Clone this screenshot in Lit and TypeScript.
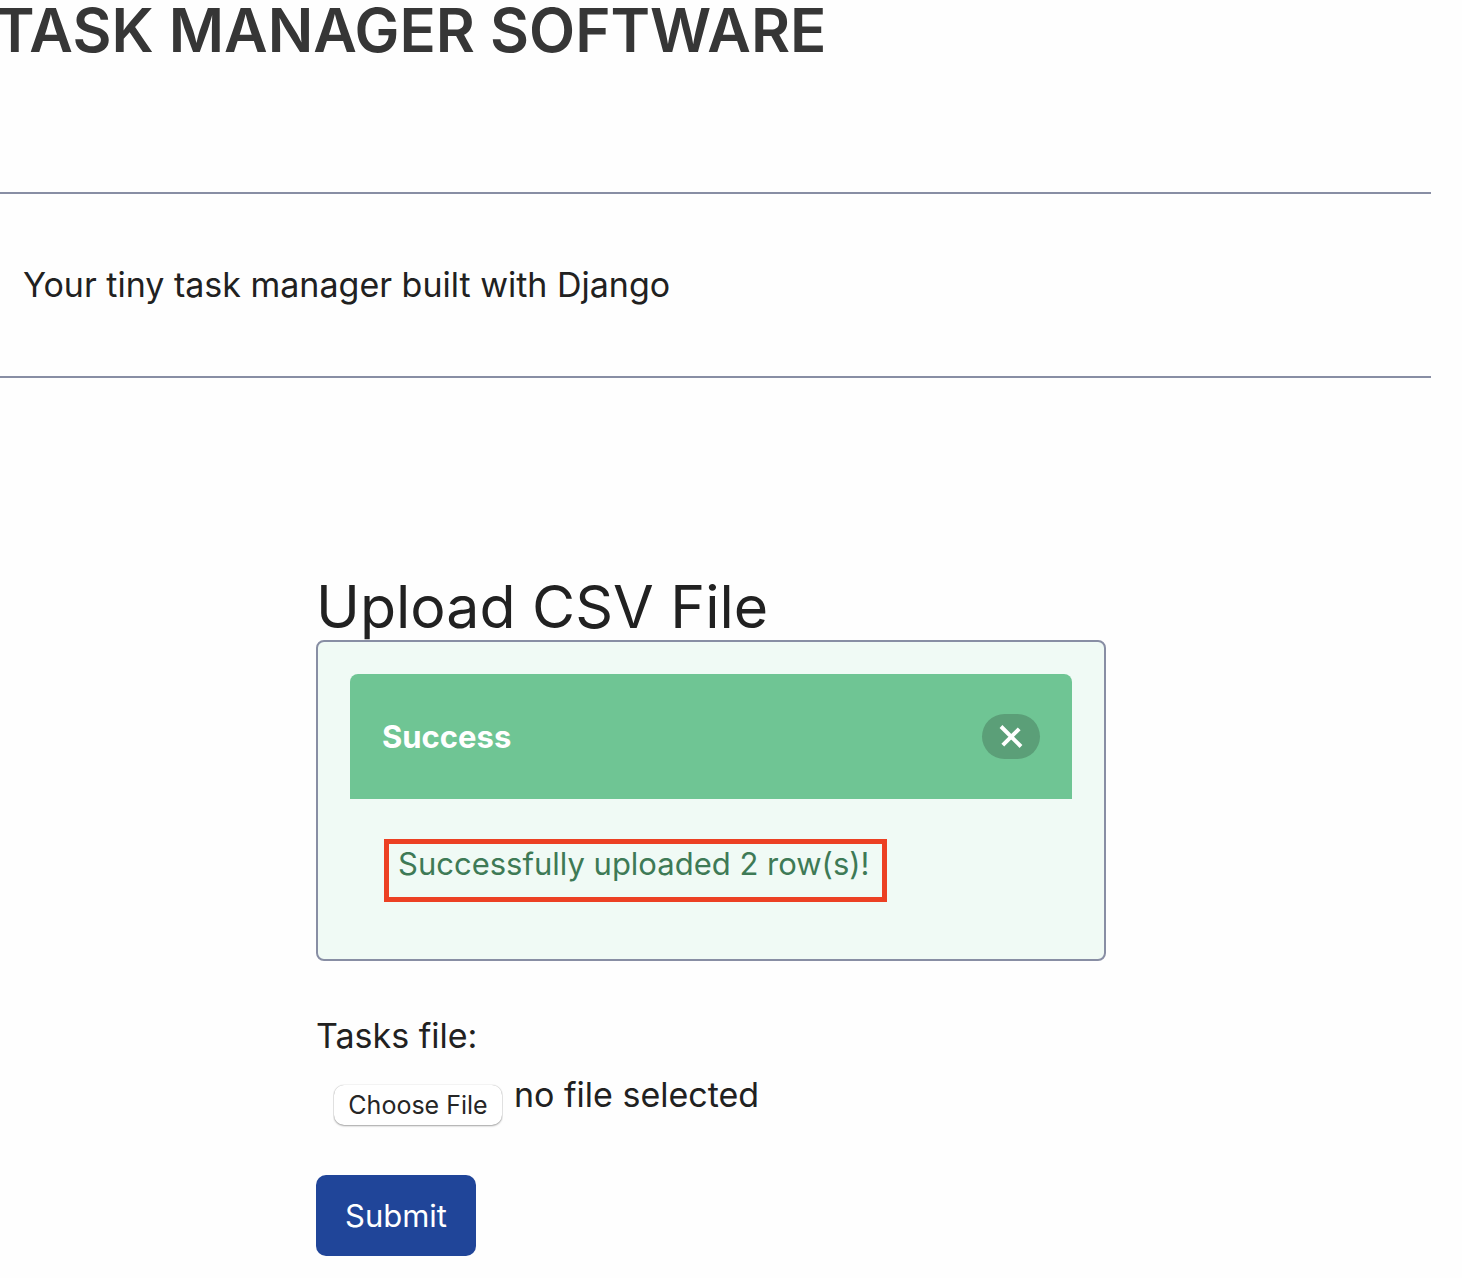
import { LitElement, html, css, nothing } from "lit";
import { customElement, property, state } from "lit/decorators.js";

const formatStatus = (files: FileList | null): string =>
  files && files.length > 0 ? files[0].name : "no file selected";

@customElement("success-message")
class SuccessMessage extends LitElement {
  @property() text = "";

  static styles = css`
    :host {
      display: block;
    }
    .message {
      padding: 32px;
      border: 2px solid #888ea4;
      border-radius: 8px;
      background: #f0faf5;
    }
    .header {
      display: flex;
      align-items: center;
      justify-content: space-between;
      padding: 40px 32px;
      border-radius: 8px 8px 0 0;
      background: #6fc594;
      color: #ffffff;
    }
    .title {
      margin: 0;
      font-size: 31px;
      font-weight: 700;
      line-height: 45px;
    }
    .close {
      display: flex;
      align-items: center;
      justify-content: center;
      width: 58px;
      height: 45px;
      padding: 0;
      border: 0;
      border-radius: 23px;
      background: #5b9f78;
      cursor: pointer;
    }
    .cross {
      width: 24px;
      height: 24px;
    }
    .body {
      display: flex;
      padding: 40px 34px 25px;
    }
    .highlight {
      padding: 0 12px 13px 9px;
      border: 5px solid #ec4023;
      color: #3e7a56;
    }
    .text {
      margin: 0;
      font-size: 31px;
      line-height: 40px;
    }
  `;

  private close() {
    this.dispatchEvent(new CustomEvent("dismiss"));
  }

  render() {
    return html`
      <section class="message" role="status">
        <div class="header">
          <p class="title">Success</p>
          <button class="close" type="button" aria-label="Close" @click=${this.close}>
            <svg class="cross" viewBox="0 0 24 24" aria-hidden="true">
              <path d="M2 1.5L22 21.5M20.2 3.8L3.8 20.2" fill="none" stroke="#fff" stroke-width="4" />
            </svg>
          </button>
        </div>
        <div class="body">
          <div class="highlight"><p class="text">${this.text}</p></div>
        </div>
      </section>
    `;
  }
}

@customElement("app-root")
class AppRoot extends LitElement {
  @state() private showMessage = true;
  @state() private fileStatus = formatStatus(null);

  static styles = css`
    :host {
      display: block;
      box-sizing: border-box;
      min-height: 100vh;
      overflow: hidden;
      background: #fefefe;
      color: #212121;
      font-family: Inter, "Liberation Sans", sans-serif;
      font-size: 34px;
    }
    .page {
      margin: 0 31px 0 -9px;
    }
    .brand {
      margin: 0;
      padding: 0 4px 132px;
      color: #363636;
      font-size: 60px;
      font-weight: 600;
      line-height: 60px;
      white-space: nowrap;
    }
    .intro {
      padding: 64px 32px;
      border-top: 2px solid #888ea4;
      border-bottom: 2px solid #888ea4;
    }
    .tagline {
      margin: 0;
      line-height: 54px;
    }
    .upload {
      max-width: 790px;
      margin: 196px auto 0;
    }
    .heading {
      margin: 0;
      font-size: 59px;
      font-weight: 400;
      line-height: 66px;
    }
    .form {
      display: flex;
      flex-direction: column;
      align-items: flex-start;
      padding-top: 48px;
    }
    .label {
      line-height: 54px;
    }
    .picker {
      display: flex;
      align-items: flex-start;
      gap: 11px;
      padding: 5px 0 0 17px;
    }
    .file {
      width: 170px;
      height: 60px;
      padding: 17px 1px 0;
      box-sizing: border-box;
      overflow: hidden;
      color: transparent;
      font: inherit;
      font-size: 25px;
    }
    .file::file-selector-button {
      width: 168px;
      height: 40px;
      margin: 0 8px 0 0;
      padding: 0;
      border: 0;
      border-radius: 10px;
      background: #ffffff;
      box-shadow: 0 1px 2px rgba(0, 0, 0, 0.35), 0 0 1px rgba(0, 0, 0, 0.3);
      color: #262626;
      font-family: inherit;
      font-size: 25px;
      line-height: 40px;
    }
    .status {
      line-height: 54px;
    }
    .submit {
      margin-top: 47px;
      padding: 0 29px;
      border: 0;
      border-radius: 10px;
      background: #204599;
      color: #ffffff;
      font-family: inherit;
      font-size: 31px;
      line-height: 81px;
      cursor: pointer;
    }
  `;

  private onFile(event: Event) {
    this.fileStatus = formatStatus((event.target as HTMLInputElement).files);
  }

  private onSubmit(event: Event) {
    event.preventDefault();
    this.showMessage = true;
  }

  render() {
    return html`
      <div class="page">
        <header>
          <h1 class="brand">TASK MANAGER SOFTWARE</h1>
          <div class="intro">
            <p class="tagline">Your tiny task manager built with Django</p>
          </div>
        </header>
        <main class="upload">
          <h2 class="heading">Upload CSV File</h2>
          ${this.showMessage
            ? html`<success-message
                text="Successfully uploaded 2 row(s)!"
                @dismiss=${() => (this.showMessage = false)}
              ></success-message>`
            : nothing}
          <form class="form" @submit=${this.onSubmit}>
            <label class="label" for="tasks-file">Tasks file:</label>
            <div class="picker">
              <input class="file" id="tasks-file" type="file" accept=".csv" @change=${this.onFile} />
              <span class="status">${this.fileStatus}</span>
            </div>
            <button class="submit" type="submit">Submit</button>
          </form>
        </main>
      </div>
    `;
  }
}
